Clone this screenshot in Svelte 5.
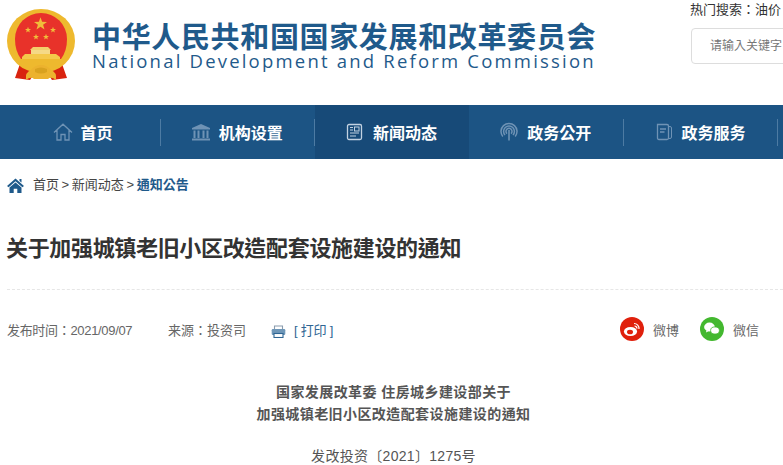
<script>
  const nav = [
    { label: '首页', icon: 'home' },
    { label: '机构设置', icon: 'bank' },
    { label: '新闻动态', icon: 'news', active: true },
    { label: '政务公开', icon: 'signal' },
    { label: '政务服务', icon: 'book' }
  ];
  const stars = [
    [22, 21], [47, 21], [30, 28], [40, 28]
  ];
  function starPoints(cx, cy, r) {
    let pts = [];
    for (let i = 0; i < 10; i++) {
      const rad = i % 2 ? r * 0.4 : r;
      const a = -Math.PI / 2 + (i * Math.PI) / 5;
      pts.push(`${(cx + rad * Math.cos(a)).toFixed(1)},${(cy + rad * Math.sin(a)).toFixed(1)}`);
    }
    return pts.join(' ');
  }
</script>

<div class="page">
  <header class="top">
    <div class="brand">
      <svg class="emblem" width="70" height="72" viewBox="0 0 70 72">
        <path d="M15 52 L9 69 L24 71 L30 62 L40 62 L46 71 L61 69 L55 52 Z" fill="#d9230f" />
        <ellipse cx="35" cy="32" rx="34" ry="32" fill="#eeb92e" />
        <path d="M9 30 A26 26 0 0 1 61 30 Q61 42 55 50 H15 Q9 42 9 30 Z" fill="#e8322a" />
        <polygon points={starPoints(34.5, 15, 6.8)} fill="#f0bd3a" />
        {#each stars as s}
          <polygon points={starPoints(s[0], s[1], 3.2)} fill="#f0bd3a" />
        {/each}
        <path d="M27 38 h15 l3 3 h-21 z" fill="#f3cf6a" />
        <path d="M25 41 h19 v4 h-19 z" fill="#f5d986" />
        <path d="M19 45 h31 l4 3 v2 h-38 v-2 z" fill="#f4c84a" />
        <path d="M20 71 q-1 -8 5 -10 q4 -5 10 -5 q6 0 10 5 q6 2 5 10 q-5 -4 -8 -1 h-14 q-3 -3 -8 1 z" fill="#ecb22e" />
        <path d="M29 60 q6 -3 12 0 v3 q-6 3 -12 0 z" fill="#d9a21f" />
      </svg>
      <div class="wordmark">
        <div class="cn">中华人民共和国国家发展和改革委员会</div>
        <div class="en">National Development and Reform Commission</div>
      </div>
    </div>
    <div class="search">
      <div class="hot">热门搜索：油价</div>
      <div class="box">请输入关键字</div>
    </div>
  </header>

  <nav class="nav">
    {#each nav as item}
      <div class="item" class:active={item.active}>
        <svg class="ico" width="20" height="20" viewBox="0 0 20 20" fill="none" stroke="#6f93b5" stroke-width="1.3">
          {#if item.icon === 'home'}
            <path d="M1 10.5 L10 2.2 L19 10.5 M4 8 V18 H8 V12.5 H12 V18 H16 V8" />
          {:else if item.icon === 'bank'}
            <path d="M10 2 L19 6 V7.5 H1 V6 Z" fill="#6f93b5" stroke="none" />
            <path d="M3.5 8.5 V16 M7.5 8.5 V16 M12.5 8.5 V16 M16.5 8.5 V16" stroke-width="2" />
            <path d="M1 17.5 H19" stroke-width="2" />
          {:else if item.icon === 'news'}
            <rect x="2.5" y="2.5" width="14" height="15" rx="1.5" stroke="#c2d2e1" />
            <rect x="9.5" y="5" width="4.5" height="4" stroke="#c2d2e1" stroke-width="1" />
            <path d="M5 5.5 H8 M5 8 H8 M5 11 H14 M5 14 H11" stroke="#c2d2e1" stroke-width="1.1" />
          {:else if item.icon === 'signal'}
            <path d="M3.8 14.5 A8 8 0 1 1 16.2 14.5 M6 13 A5.4 5.4 0 1 1 14 13 M8 11.6 A3 3 0 1 1 12 11.6" stroke-width="1.5" />
            <path d="M10 8 V18.5" stroke-width="1.6" />
          {:else}
            <path d="M3.5 2.5 H13 Q14.5 2.5 14.5 4 V16 Q14.5 17.5 13 17.5 H5 Q3.5 17.5 3.5 16 Z" />
            <path d="M14.5 4.5 H16 Q17.5 4.5 17.5 6 V15 Q17.5 16.5 16 16.5 H14.5" stroke-width="1" />
            <path d="M6 7 H12 M6 10 H10.5" />
          {/if}
        </svg>
        <span>{item.label}</span>
      </div>
    {/each}
  </nav>

  <div class="crumbs">
    <svg width="17" height="15" viewBox="0 0 17 15">
      <path d="M8.5 0.5 L17 8 L15.4 9.2 L8.5 3.3 L1.6 9.2 L0 8 Z M12.5 1 H14.5 V4.5 L12.5 3 Z" fill="#1f5a8b" />
      <path d="M8.5 4.6 L14.5 9.6 V15 H10.3 V10.8 H6.7 V15 H2.5 V9.6 Z" fill="#1f5a8b" />
    </svg>
    <span>首页 &gt; 新闻动态 &gt; <b>通知公告</b></span>
  </div>

  <h1>关于加强城镇老旧小区改造配套设施建设的通知</h1>

  <div class="meta">
    <span class="date">发布时间：2021/09/07</span>
    <span class="source">来源：投资司</span>
    <svg class="printer" width="15" height="13" viewBox="0 0 15 13">
      <path d="M3.5 4 V1 H11.5 V4" fill="none" stroke="#8a9cae" stroke-width="1.1" />
      <rect x="0.7" y="4" width="13.6" height="6" rx="1.2" fill="#6f97b8" />
      <rect x="3" y="8.5" width="9" height="4" fill="#fff" stroke="#2f6593" stroke-width="1.1" />
    </svg>
    <span class="print">[ 打印 ]</span>
    <div class="share">
      <svg width="24" height="24" viewBox="0 0 24 24">
        <circle cx="12" cy="12" r="12" fill="#e0200c" />
        <ellipse cx="10.5" cy="14.5" rx="6.6" ry="4.6" fill="#fff" />
        <ellipse cx="10" cy="15" rx="3" ry="2.3" fill="#e0200c" />
        <path d="M14 6.5 a5 5 0 0 1 5 5.5 M14.5 9 a2.4 2.4 0 0 1 2.4 2.6" fill="none" stroke="#fff" stroke-width="1.2" />
      </svg>
      <span class="weibo">微博</span>
      <svg width="24" height="24" viewBox="0 0 24 24">
        <circle cx="12" cy="12" r="12" fill="#43b82f" />
        <ellipse cx="9.5" cy="10" rx="5.4" ry="4.4" fill="#fff" />
        <path d="M6.5 13 L6 15.5 L9 14 Z" fill="#fff" />
        <ellipse cx="15" cy="13.5" rx="4.4" ry="3.6" fill="#fff" stroke="#43b82f" stroke-width="0.8" />
      </svg>
      <span>微信</span>
    </div>
  </div>

  <div class="article">
    <p class="strong">国家发展改革委 住房城乡建设部关于</p>
    <p class="strong">加强城镇老旧小区改造配套设施建设的通知</p>
    <p class="doc">发改投资〔2021〕1275号</p>
  </div>
</div>

<style>
  :global(body) {
    margin: 0;
    background: #fff;
    overflow: hidden;
  }

  .page {
    width: 783px;
    height: 465px;
    overflow: hidden;
    font-family: "Liberation Sans", "Noto Sans CJK TC", sans-serif;
    color: #555;
    font-size: 13px;
  }

  .top {
    height: 105px;
    display: flex;
    justify-content: space-between;
  }

  .brand {
    display: flex;
    padding: 9px 0 0 6px;
    gap: 16px;
  }

  .emblem {
    display: block;
  }

  .wordmark {
    padding-top: 15px;
    color: #1f5a8b;
  }

  .cn {
    font-family: "Liberation Sans", "Noto Sans CJK SC", sans-serif;
    font-size: 29px;
    line-height: 28px;
    font-weight: 700;
    letter-spacing: 0.65px;
    white-space: nowrap;
  }

  .en {
    font-family: "Open Sans", sans-serif;
    font-size: 18.5px;
    line-height: 18px;
    letter-spacing: 2.2px;
    white-space: nowrap;
  }

  .search {
    width: 93px;
    flex: none;
  }

  .hot {
    font-size: 13px;
    line-height: 20px;
    color: #333;
    white-space: nowrap;
  }

  .box {
    box-sizing: border-box;
    margin: 8px 0 0 1px;
    width: 140px;
    height: 36px;
    line-height: 34px;
    padding-left: 18px;
    border: 1px solid #ddd;
    border-radius: 4px;
    color: #777;
    font-size: 12px;
    white-space: nowrap;
  }

  .nav {
    height: 54px;
    background: #1c5484;
    display: flex;
    padding-left: 5.5px;
    width: 783px;
    box-sizing: border-box;
  }

  .item {
    flex: none;
    width: 154.25px;
    height: 100%;
    display: flex;
    align-items: center;
    justify-content: center;
    gap: 8px;
    color: #fff;
    font-size: 16px;
    font-weight: 700;
    position: relative;
  }

  .item::after {
    content: "";
    position: absolute;
    right: -1px;
    top: 14px;
    height: 27px;
    width: 1px;
    background: #4d7ba3;
  }

  .item.active::before {
    content: "";
    position: absolute;
    left: 1px;
    right: -1px;
    top: 0;
    bottom: 0;
    background: #174a78;
  }

  .item.active::after {
    display: none;
  }

  .item svg,
  .item span {
    position: relative;
  }

  .ico {
    flex: none;
  }

  .crumbs {
    display: flex;
    align-items: center;
    gap: 9px;
    padding: 17px 0 0 7px;
    height: 18px;
    color: #444;
    font-size: 13px;
    word-spacing: -1px;
    line-height: 18px;
  }

  .crumbs b {
    color: #1f5a8b;
  }

  h1 {
    margin: 40px 0 0 6px;
    font-size: 22px;
    letter-spacing: -0.33px;
    line-height: 30px;
    font-weight: 700;
    color: #333;
    white-space: nowrap;
  }

  .meta {
    margin: 25px 0 0 7px;
    border-top: 1px dashed #e6e6e6;
    padding-top: 26px;
    display: flex;
    align-items: center;
    height: 26px;
    color: #666;
    position: relative;
  }

  .date {
    width: 161px;
    letter-spacing: -0.32px;
  }

  .source {
    width: 103px;
  }

  .printer {
    margin-right: 8px;
    margin-top: 4px;
  }

  .print {
    color: #2f6593;
    letter-spacing: -0.2px;
  }

  .share {
    margin-left: auto;
    margin-right: 24px;
    display: flex;
    align-items: center;
    color: #666;
  }

  .share span {
    margin-left: 9px;
    width: 26px;
    white-space: nowrap;
  }

  .share .weibo {
    margin-right: 21px;
  }

  .article {
    margin-top: 39px;
    padding-left: 4px;
    text-align: center;
    font-size: 14px;
    letter-spacing: 0.42px;
    color: #555;
  }

  .article p {
    margin: 0;
    line-height: 22px;
  }

  .strong {
    font-weight: 700;
  }

  .article .doc {
    margin-top: 20px;
    letter-spacing: 0.3px;
  }
</style>
